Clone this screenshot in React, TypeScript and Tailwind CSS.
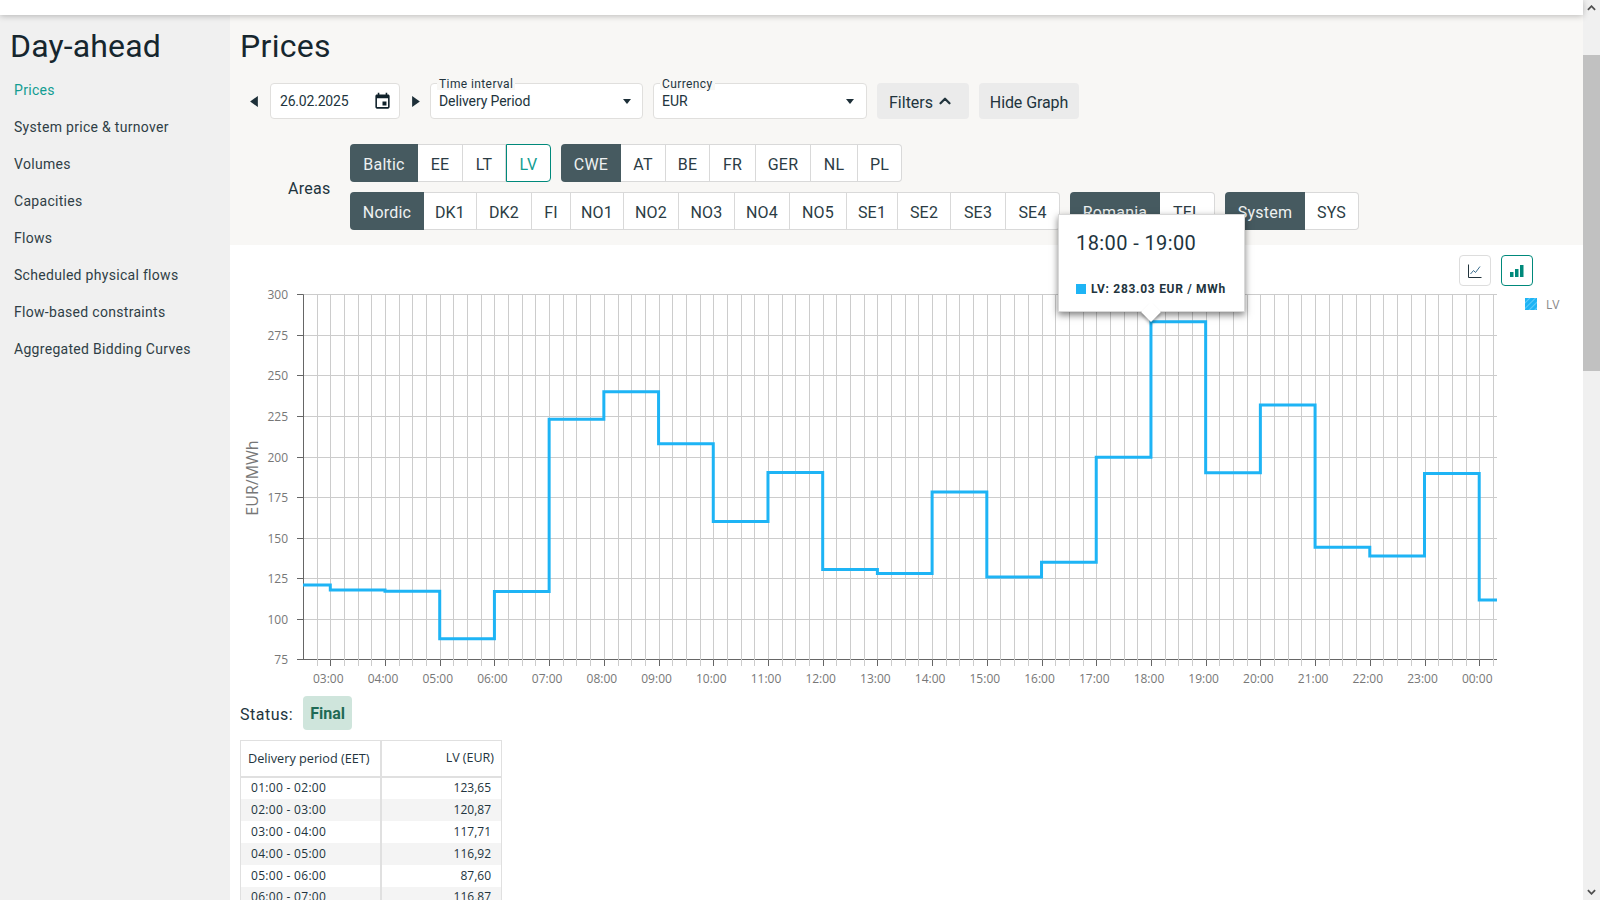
import { ChevronUp } from 'lucide-react'

const nav = [
  'Prices',
  'System price & turnover',
  'Volumes',
  'Capacities',
  'Flows',
  'Scheduled physical flows',
  'Flow-based constraints',
  'Aggregated Bidding Curves',
]

type Area = { label: string; w: string; head?: boolean; active?: boolean }

const groupsTop: Area[][] = [
  [
    { label: 'Baltic', w: 'w-[68px]', head: true },
    { label: 'EE', w: 'w-[45px]' },
    { label: 'LT', w: 'w-[43px]' },
    { label: 'LV', w: 'w-[45px]', active: true },
  ],
  [
    { label: 'CWE', w: 'w-[60px]', head: true },
    { label: 'AT', w: 'w-[45px]' },
    { label: 'BE', w: 'w-[44px]' },
    { label: 'FR', w: 'w-[46px]' },
    { label: 'GER', w: 'w-[55px]' },
    { label: 'NL', w: 'w-[47px]' },
    { label: 'PL', w: 'w-[44px]' },
  ],
]

const groupsBottom: Area[][] = [
  [
    { label: 'Nordic', w: 'w-[74px]', head: true },
    { label: 'DK1', w: 'w-[53px]' },
    { label: 'DK2', w: 'w-[55px]' },
    { label: 'FI', w: 'w-[39px]' },
    { label: 'NO1', w: 'w-[53px]' },
    { label: 'NO2', w: 'w-[55px]' },
    { label: 'NO3', w: 'w-[56px]' },
    { label: 'NO4', w: 'w-[55px]' },
    { label: 'NO5', w: 'w-[57px]' },
    { label: 'SE1', w: 'w-[51px]' },
    { label: 'SE2', w: 'w-[53px]' },
    { label: 'SE3', w: 'w-[55px]' },
    { label: 'SE4', w: 'w-[54px]' },
  ],
  [
    { label: 'Romania', w: 'w-[90px]', head: true },
    { label: 'TEL', w: 'w-[55px]' },
  ],
  [
    { label: 'System', w: 'w-[80px]', head: true },
    { label: 'SYS', w: 'w-[54px]' },
  ],
]

const rows = [
  ['01:00 - 02:00', '123,65'],
  ['02:00 - 03:00', '120,87'],
  ['03:00 - 04:00', '117,71'],
  ['04:00 - 05:00', '116,92'],
  ['05:00 - 06:00', '87,60'],
  ['06:00 - 07:00', '116,87'],
]

// hourly prices from 02:00 onwards
const prices = [
  120.87, 117.71, 116.92, 87.6, 116.87, 222.9, 239.9, 207.8, 160, 190.2, 130.4, 127.9, 178.2, 125.7,
  134.8, 199.6, 283.03, 190, 231.7, 144, 138.7, 189.6, 111.6,
]

const hourLabels = [
  '03:00', '04:00', '05:00', '06:00', '07:00', '08:00', '09:00', '10:00', '11:00', '12:00', '13:00',
  '14:00', '15:00', '16:00', '17:00', '18:00', '19:00', '20:00', '21:00', '22:00', '23:00', '00:00',
]

const LEFT = 303
const RIGHT = 1497
const TOP = 294.3
const BOTTOM = 659.3
const HOUR = 54.71
const FIRST_HOUR = 330.3

const yOf = (v: number) => TOP + ((300 - v) / 225) * (BOTTOM - TOP)
const xOf = (i: number) => FIRST_HOUR + i * HOUR
const crisp = (n: number) => Math.round(n) + 0.5

function linePoints() {
  const pts: string[] = [`${LEFT},${yOf(prices[0])}`]
  prices.forEach((p, i) => {
    if (i === 0) return
    pts.push(`${xOf(i - 1)},${yOf(prices[i - 1])}`)
    pts.push(`${xOf(i - 1)},${yOf(p)}`)
  })
  pts.push(`${RIGHT},${yOf(prices[prices.length - 1])}`)
  return pts.join(' ')
}

function PriceChart() {
  const yTicks = [300, 275, 250, 225, 200, 175, 150, 125, 100, 75]
  const quarters: number[] = []
  for (let i = -1; i <= 85; i++) quarters.push(FIRST_HOUR + (i * HOUR) / 4)

  return (
    <svg viewBox="230 245 1353 451" className="block h-[451px] w-[1353px]">
      <defs>
        <pattern id="legend-hatch" width="4" height="4" patternUnits="userSpaceOnUse" patternTransform="rotate(45)">
          <rect width="4" height="4" fill="#1eb4f5" />
          <rect width="1" height="4" fill="#62ccf8" />
        </pattern>
      </defs>

      {yTicks.map((v) => (
        <g key={v}>
          <line x1={297} x2={RIGHT} y1={crisp(yOf(v))} y2={crisp(yOf(v))} stroke={v === 75 ? '#666' : '#ccc'} />
          <line x1={297} x2={LEFT} y1={crisp(yOf(v))} y2={crisp(yOf(v))} stroke="#666" />
          <text x={288} y={yOf(v) + 5} textAnchor="end" fontSize="12" fill="#777" fontFamily="'Open Sans', sans-serif">
            {v}
          </text>
        </g>
      ))}

      {quarters.map((x) => (
        <line key={x} x1={crisp(x)} x2={crisp(x)} y1={TOP} y2={666} stroke="#ccc" />
      ))}

      <line x1={LEFT + 0.5} x2={LEFT + 0.5} y1={TOP} y2={BOTTOM} stroke="#666" />

      {hourLabels.map((h, i) => (
        <g key={h}>
          <line x1={crisp(xOf(i))} x2={crisp(xOf(i))} y1={BOTTOM} y2={666} stroke="#666" />
          <text
            x={xOf(i) - 2}
            y={683}
            textAnchor="middle"
            fontSize="12"
            fill="#777"
            fontFamily="'Open Sans', sans-serif"
          >
            {h}
          </text>
        </g>
      ))}

      <polyline points={linePoints()} fill="none" stroke="#1eb4f5" strokeWidth="3" strokeLinejoin="miter" />

      <text
        transform="translate(258 478) rotate(-90)"
        textAnchor="middle"
        fontSize="16"
        fill="#777"
        fontFamily="'Open Sans', sans-serif"
      >
        EUR/MWh
      </text>

      <rect x={1525} y={298} width={12} height={12} fill="url(#legend-hatch)" />
      <text x={1546} y={309} fontSize="12" fill="#888" fontFamily="'Open Sans', sans-serif">
        LV
      </text>
    </svg>
  )
}

function AreaGroup({ items }: { items: Area[] }) {
  return (
    <div className="flex h-[38px]">
      {items.map((a) => {
        if (a.head) {
          return (
            <button
              key={a.label}
              type="button"
              className={`${a.w} flex items-center justify-center rounded-l-[4px] bg-[#465a60] pt-[3px] text-[16px] tracking-[0.2px] text-[#eef1f1]`}
            >
              {a.label}
            </button>
          )
        }
        if (a.active) {
          return (
            <button
              key={a.label}
              type="button"
              className={`${a.w} flex items-center justify-center rounded-r-[4px] border border-[#00897b] bg-white pt-[3px] text-[16px] tracking-[0.2px] text-[#129d92]`}
            >
              {a.label}
            </button>
          )
        }
        return (
          <button
            key={a.label}
            type="button"
            className={`${a.w} flex items-center justify-center border-y border-r border-[#d9d9d9] bg-white pt-[3px] text-[16px] tracking-[0.2px] text-[#2b3c44] last:rounded-r-[4px]`}
          >
            {a.label}
          </button>
        )
      })}
    </div>
  )
}

function Caret() {
  return (
    <svg viewBox="0 0 8 5" className="h-[5px] w-[8px] fill-[#1d2f38]">
      <polygon points="0,0 8,0 4,5" />
    </svg>
  )
}

export default function App() {
  return (
    <div className="flex h-[900px] w-full overflow-hidden bg-white font-['Roboto',sans-serif] text-[#22343d]">
      <div className="flex min-w-0 flex-1 flex-col">
        <div className="relative z-10 h-[15px] bg-white shadow-[0_1px_6px_rgba(0,0,0,0.25)]" />
        <div className="flex min-h-0 flex-1">
          <aside className="w-[230px] shrink-0 bg-[#f0f0f0]">
            <h2 className="pt-[11px] pl-[10px] text-[32px] leading-[40px] tracking-[0.15px] text-[#16262e]">Day-ahead</h2>
            <nav className="mt-[6px] flex flex-col">
              {nav.map((item, i) => (
                <a
                  key={item}
                  className={`flex h-[37px] items-center pl-[14px] text-[14px] tracking-[0.3px] ${
                    i === 0 ? 'text-[#129d92]' : 'text-[#2f3e46]'
                  }`}
                >
                  {item}
                </a>
              ))}
            </nav>
          </aside>

          <main className="min-w-0 flex-1">
            <section className="h-[230px] bg-[#f8f7f5] pl-[10px]">
              <h1 className="pt-[11px] pb-[17px] text-[32px] leading-[40px] tracking-[0.3px] text-[#16262e]">Prices</h1>

              <div className="flex h-9 items-stretch">
                <div className="flex w-[30px] items-center pl-[10px]">
                  <svg viewBox="0 0 7 10" className="h-[11px] w-[8px] fill-[#1d2f38]">
                    <polygon points="7,0 7,10 0,5" />
                  </svg>
                </div>
                <div className="flex w-[130px] items-center justify-between rounded-[4px] border border-[#e0dfdd] bg-white pr-[7px] pl-[9px] text-[14px]">
                  <span className="tracking-[-0.2px]">26.02.2025</span>
                  <svg viewBox="0 0 24 24" className="h-[19px] w-[19px] fill-[#10222b]">
                    <path d="M17 12h-5v5h5v-5zM16 1v2H8V1H6v2H5c-1.11 0-1.99.9-1.99 2L3 19c0 1.1.89 2 2 2h14c1.1 0 2-.9 2-2V5c0-1.1-.9-2-2-2h-1V1h-2zm3 18H5V8h14v11z" />
                  </svg>
                </div>
                <div className="flex w-[30px] items-center pl-[12px]">
                  <svg viewBox="0 0 7 10" className="h-[11px] w-[8px] fill-[#1d2f38]">
                    <polygon points="0,0 0,10 7,5" />
                  </svg>
                </div>

                <div className="relative flex w-[213px] items-center justify-between rounded-[4px] border border-[#e0dfdd] bg-white pr-[11px] pl-[8px] text-[14px]">
                  <span className="absolute -top-[6px] left-[6px] bg-[#f8f7f5] px-[2px] text-[12px] leading-[12px] tracking-[0.4px]">
                    Time interval
                  </span>
                  <span className="pt-[1px] tracking-[-0.1px]">Delivery Period</span>
                  <Caret />
                </div>

                <div className="relative ml-[10px] flex w-[214px] items-center justify-between rounded-[4px] border border-[#e0dfdd] bg-white pr-[12px] pl-[8px] text-[14px]">
                  <span className="absolute -top-[6px] left-[6px] bg-[#f8f7f5] px-[2px] text-[12px] leading-[12px] tracking-[0.4px]">
                    Currency
                  </span>
                  <span className="pt-[1px]">EUR</span>
                  <Caret />
                </div>

                <button
                  type="button"
                  className="ml-[10px] flex w-[92px] items-center rounded-[4px] bg-[#ebebeb] pl-[12px] text-[16px]"
                >
                  <span className="pt-[3px]">Filters</span>
                  <ChevronUp className="ml-[3px] h-[18px] w-[18px]" strokeWidth={3} />
                </button>
                <button type="button" className="ml-[10px] w-[100px] rounded-[4px] bg-[#ebebeb] pt-[3px] text-[16px] tracking-[-0.1px]">
                  Hide Graph
                </button>
              </div>

              <div className="mt-[25px] flex">
                <div className="flex w-[110px] items-center pt-[3px] pl-[48px] text-[16px] tracking-[0.3px]">Areas</div>
                <div className="flex flex-col gap-[10px]">
                  <div className="flex gap-[10px]">
                    {groupsTop.map((g) => (
                      <AreaGroup key={g[0].label} items={g} />
                    ))}
                  </div>
                  <div className="flex gap-[10px]">
                    {groupsBottom.map((g) => (
                      <AreaGroup key={g[0].label} items={g} />
                    ))}
                  </div>
                </div>
              </div>
            </section>

            <section className="relative">
              <PriceChart />

              {/* chart type toggle */}
              <div className="absolute top-[10px] right-[50px] flex gap-[10px]">
                <button
                  type="button"
                  className="flex h-[31px] w-[32px] items-center justify-center rounded-[4px] border border-[#ddd] bg-white"
                >
                  <svg viewBox="0 0 16 16" className="h-4 w-4 fill-none stroke-[#22343d]">
                    <path d="M1.5 1.5v13h13" />
                    <path d="M3.5 11l3-3.5 2 2 4.5-6" className="stroke-[#3b6e8f]" />
                  </svg>
                </button>
                <button
                  type="button"
                  className="flex h-[31px] w-[32px] items-center justify-center rounded-[4px] border border-[#00897b] bg-white"
                >
                  <svg viewBox="0 0 14 14" className="h-[14px] w-[14px] fill-[#00897b]">
                    <rect x="0" y="8" width="3.5" height="5" />
                    <rect x="5" y="5" width="3.5" height="8" />
                    <rect x="10" y="1" width="3.5" height="12" />
                  </svg>
                </button>
              </div>

              {/* hover tooltip */}
              <div className="absolute top-[-31px] left-[828px] h-[98px] w-[187px] border border-[#d8d8d8] bg-white shadow-[0_3px_7px_rgba(0,0,0,0.5)]">
                <div className="absolute -bottom-[8px] left-[85px] h-[14px] w-[14px] rotate-45 bg-white shadow-[2px_2px_3px_rgba(0,0,0,0.3)]" />
                <div className="relative pt-[14px] pl-[17px] text-[20px] leading-[28px] tracking-[0.4px]">18:00 - 19:00</div>
                <div className="relative mt-[23px] flex items-center pl-[17px] text-[12px] font-bold tracking-[0.7px]">
                  <span className="mr-[5px] h-[10px] w-[10px] bg-[#1eb4f5]" />
                  LV: 283.03 EUR / MWh
                </div>
              </div>

              <div className="flex h-[34px] items-center pl-[10px]">
                <span className="pt-[3px] text-[16px] tracking-[0.5px]">Status:</span>
                <span className="ml-[10px] flex h-[34px] w-[49px] items-center justify-center rounded-[4px] bg-[#cfe5dc] pt-[2px] text-[16px] font-bold text-[#1f6a55]">
                  Final
                </span>
              </div>

              <table className="mt-[10px] ml-[10px] w-[262px] table-fixed border-collapse border border-[#e0e0e0] font-['Open_Sans',sans-serif] text-[12px] text-[#22343d]">
                <thead>
                  <tr className="h-[36px] border-b-2 border-[#e0e0e0]">
                    <th className="w-[140px] border-r-2 border-[#e0e0e0] pl-[7px] text-left text-[12.7px] font-normal">
                      Delivery period (EET)
                    </th>
                    <th className="pr-[7px] text-right text-[12.5px] font-normal">LV (EUR)</th>
                  </tr>
                </thead>
                <tbody>
                  {rows.map(([period, price]) => (
                    <tr key={period} className="h-[22px] even:bg-[#f4f4f4]">
                      <td className="border-r-2 border-[#e0e0e0] pl-[10px] tracking-[0.3px]">{period}</td>
                      <td className="pr-[10px] text-right">{price}</td>
                    </tr>
                  ))}
                </tbody>
              </table>
            </section>
          </main>
        </div>
      </div>

      {/* page scrollbar */}
      <div className="relative w-[17px] shrink-0 bg-[#f0f0f0]">
        <div className="absolute top-[55px] h-[316px] w-full bg-[#c1c1c1]" />
        <svg viewBox="0 0 10 6" className="absolute top-[5px] left-[4px] h-[6px] w-[9px] fill-none stroke-[#505050] stroke-2">
          <path d="M1 5l4-4 4 4" />
        </svg>
        <svg viewBox="0 0 10 6" className="absolute bottom-[5px] left-[4px] h-[6px] w-[9px] fill-none stroke-[#505050] stroke-2">
          <path d="M1 1l4 4 4-4" />
        </svg>
      </div>
    </div>
  )
}
